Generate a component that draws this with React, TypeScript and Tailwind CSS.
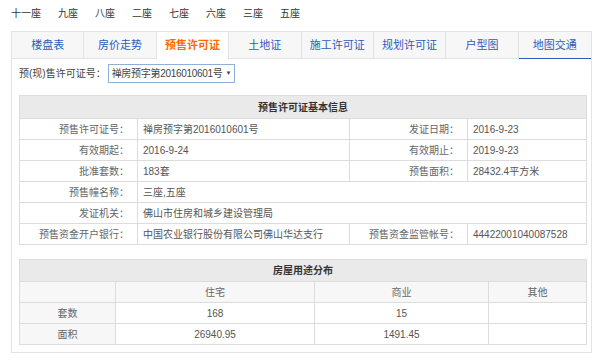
import React from 'react';

const font = { fontFamily: '"Liberation Sans", "Noto Sans CJK SC", sans-serif' };

const buildings = ['十一座', '九座', '八座', '二座', '七座', '六座', '三座', '五座'];
const tabs = ['楼盘表', '房价走势', '预售许可证', '土地证', '施工许可证', '规划许可证', '户型图', '地图交通'];

const cell = 'border border-[#dcdcdc] h-[21px] p-0';

export default function App() {
  const active = 2;
  return (
    <div className="w-[600px] h-[360px] bg-white text-[10px] text-[#555] overflow-hidden" style={font}>
      {/* building list */}
      <div className="flex h-[26px] items-center gap-[17px] pl-[11px] text-[#333]">
        {buildings.map((b) => (
          <span key={b}>{b}</span>
        ))}
      </div>

      <div className="ml-[11px] mt-[5px] w-[581px]">
        {/* tabs */}
        <div className="grid grid-cols-8 border-t border-l border-r border-[#e3e3e3] h-[28px]">
          {tabs.map((t, i) => (
            <div
              key={t}
              className={
                'flex items-center justify-center text-[11px] ' +
                (i < tabs.length - 1 ? 'border-r border-[#e3e3e3] ' : '') +
                (i === active
                  ? 'bg-white text-[#ff6a00] font-bold'
                  : 'bg-[#f7f7f7] text-[#2d5bb9] border-b')
              }
            >
              {t}
            </div>
          ))}
        </div>

        {/* panel */}
        <div className="border-l border-r border-b border-[#e3e3e3] pl-[7px] pr-[5px] pt-[5px] pb-[7px]">
          <div className="flex items-center h-[19px]">
            <span className="text-[#444]">预(现)售许可证号：</span>
            <div className="ml-[2px] flex items-center h-[19px] w-[127px] border border-[#8fb0d6] pl-[3px] text-[#444] whitespace-nowrap overflow-hidden">
              <span className="tracking-[-0.3px]">禅房预字第2016010601号</span>
              <span className="ml-[3px] text-[6px]">▼</span>
            </div>
          </div>

          <table className="mt-[12px] w-[567px] table-fixed border-collapse">
            <colgroup>
              <col className="w-[118px]" />
              <col className="w-[212px]" />
              <col className="w-[118px]" />
              <col className="w-[119px]" />
            </colgroup>
            <tbody>
              <tr>
                <td colSpan={4} className="border border-[#dcdcdc] h-[23px] bg-[#eaeaea] text-center font-bold text-[#333]">
                  预售许可证基本信息
                </td>
              </tr>
              <tr>
                <td className={cell + ' text-right pr-[8px] text-[#666]'}>预售许可证号：</td>
                <td className={cell + ' pl-[5px]'}>禅房预字第2016010601号</td>
                <td className={cell + ' text-right pr-[8px] text-[#666]'}>发证日期：</td>
                <td className={cell + ' pl-[5px]'}>2016-9-23</td>
              </tr>
              <tr>
                <td className={cell + ' text-right pr-[8px] text-[#666]'}>有效期起：</td>
                <td className={cell + ' pl-[5px]'}>2016-9-24</td>
                <td className={cell + ' text-right pr-[8px] text-[#666]'}>有效期止：</td>
                <td className={cell + ' pl-[5px]'}>2019-9-23</td>
              </tr>
              <tr>
                <td className={cell + ' text-right pr-[8px] text-[#666]'}>批准套数：</td>
                <td className={cell + ' pl-[5px]'}>183套</td>
                <td className={cell + ' text-right pr-[8px] text-[#666]'}>预售面积：</td>
                <td className={cell + ' pl-[5px]'}>28432.4平方米</td>
              </tr>
              <tr>
                <td className={cell + ' text-right pr-[8px] text-[#666]'}>预售幢名称：</td>
                <td colSpan={3} className={cell + ' pl-[5px]'}>三座,五座</td>
              </tr>
              <tr>
                <td className={cell + ' text-right pr-[8px] text-[#666]'}>发证机关：</td>
                <td colSpan={3} className={cell + ' pl-[5px]'}>佛山市住房和城乡建设管理局</td>
              </tr>
              <tr>
                <td className={cell + ' text-right pr-[8px] text-[#666]'}>预售资金开户银行：</td>
                <td className={cell + ' pl-[5px]'}>中国农业银行股份有限公司佛山华达支行</td>
                <td className={cell + ' text-right pr-[8px] text-[#666]'}>预售资金监管帐号：</td>
                <td className={cell + ' pl-[5px]'}>44422001040087528</td>
              </tr>
            </tbody>
          </table>

          <table className="mt-[14px] w-[567px] table-fixed border-collapse text-center">
            <colgroup>
              <col className="w-[96px]" />
              <col className="w-[199px]" />
              <col className="w-[174px]" />
              <col className="w-[98px]" />
            </colgroup>
            <tbody>
              <tr>
                <td colSpan={4} className="border border-[#dcdcdc] h-[22px] bg-[#eaeaea] font-bold text-[#333]">
                  房屋用途分布
                </td>
              </tr>
              <tr className="bg-[#f7f7f7] text-[#666]">
                <td className={cell}></td>
                <td className={cell}>住宅</td>
                <td className={cell}>商业</td>
                <td className={cell}>其他</td>
              </tr>
              <tr>
                <td className={cell + ' bg-[#f7f7f7] text-[#666]'}>套数</td>
                <td className={cell}>168</td>
                <td className={cell}>15</td>
                <td className={cell}></td>
              </tr>
              <tr>
                <td className={cell + ' bg-[#f7f7f7] text-[#666]'}>面积</td>
                <td className={cell}>26940.95</td>
                <td className={cell}>1491.45</td>
                <td className={cell}></td>
              </tr>
            </tbody>
          </table>
        </div>
      </div>
    </div>
  );
}
